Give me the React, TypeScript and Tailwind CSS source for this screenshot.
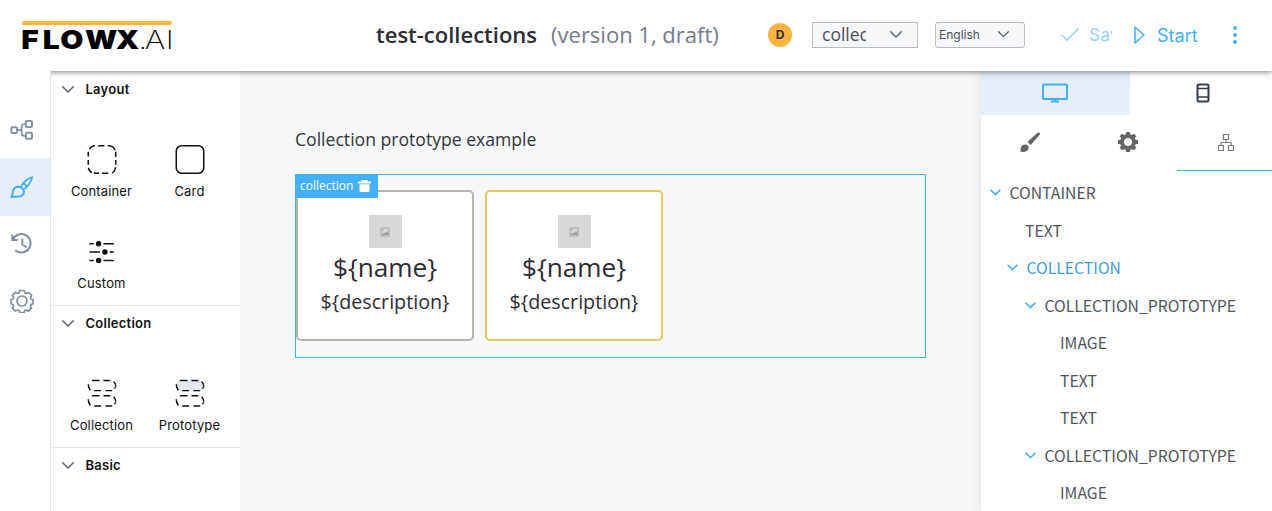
import React from "react";

type IconProps = { className?: string };

function Chevron({ className = "" }: IconProps) {
  return (
    <svg viewBox="0 0 12 7" fill="none" stroke="currentColor" strokeWidth="1.4" strokeLinecap="round" strokeLinejoin="round" className={className}>
      <path d="M.7.8 6 6.1 11.3.8" />
    </svg>
  );
}

function Logo() {
  return (
    <svg viewBox="0 0 160 32" className="h-8 w-[160px] overflow-visible">
      <rect x="0.5" y="1" width="149" height="4" fill="#fbb440" />
      <text transform="scale(1.15 1)" x="-0.7 18 33.2 54.8 81.6" y="29" fontFamily="Inter" fontWeight="900" fontSize="26">FLOWX</text>
      <text transform="scale(1.2 1)" x="97 102.3 119.8" y="29" fontFamily="Inter" fontWeight="200" fontSize="26">.AI</text>
    </svg>
  );
}

function ContainerIcon() {
  return (
    <svg viewBox="0 0 30 30" className="size-[30px]" fill="none" stroke="#101114" strokeWidth="1.6">
      <path d="M2.2 4.500Q3.500 1 7.700.8M11 .8h6.500M21 .8Q27.200.6 28.500 5.500M29.200 7v5.500M29.200 15.500v5M29 23Q28.500 27.500 25.500 28.800M21.500 29.200h-6.500M12 29.200H6.500M4.500 28.700Q1.300 27 1 23.500M.8 20.500v-5M.8 12V7" />
    </svg>
  );
}

function CardIcon() {
  return (
    <svg viewBox="0 0 30 30" className="size-[30px]" fill="none" stroke="#101114" strokeWidth="1.6">
      <rect x=".8" y=".8" width="28.400" height="28.400" rx="5.500" />
    </svg>
  );
}

function CustomIcon() {
  return (
    <svg viewBox="0 0 30 30" className="size-[30px]" fill="none" stroke="#101114" strokeWidth="1.4">
      <path d="M2 7h4.500M16.500 7H27.300M2 15.500h11M23 15.500h4.300M2 24.300h4.500M16.500 24.300H27.300" />
      <g fill="#101114" stroke="none">
        <circle cx="11.500" cy="7" r="2.800" />
        <circle cx="18" cy="15.500" r="2.800" />
        <circle cx="11.500" cy="24.300" r="2.800" />
      </g>
    </svg>
  );
}

function RowsIcon({ filled = false }: { filled?: boolean }) {
  return (
    <svg viewBox="0 0 30 30" className="size-[30px]" fill="none" stroke="#101114" strokeWidth="1.5">
      {filled && <rect x=".7" y="1.500" width="28.600" height="11" rx="5" fill="#e3e8ec" stroke="none" />}
      <path d="M4.500 1.500h8M16.500 1.500h7M27 2.800Q29.300 4.500 29.300 8M29 8.500 28 10M.8 5.500Q.8 9 3 11.800M7 12h7M18.500 12h7" />
      <path d="M4.500 17.300h8M16.500 17.300h7M27 18.500Q29.300 20 29.300 23.500M29 24 28 26M.8 21Q.8 25 3 27.500M7 28h7M18.500 28h7" />
    </svg>
  );
}

function Tool({ label, children }: { label: string; children: React.ReactNode }) {
  return (
    <div className="flex h-[92px] w-[88px] flex-col items-center pt-[38px]">
      {children}
      <span className="mt-[9px] text-[13px] leading-4 tracking-[0.15px] whitespace-nowrap">{label}</span>
    </div>
  );
}

function Section({ title, children }: { title: string; children?: React.ReactNode }) {
  return (
    <section className="border-b border-[#dfe5ea] pb-[14px] last:border-b-0">
      <h2 className="flex h-[35px] items-center gap-[11.500px] pt-px pl-[11px] text-[13px] font-semibold tracking-[0.25px]">
        <Chevron className="-mt-0.5 h-[7px] w-3 text-[#565d68]" />
        {title}
      </h2>
      <div className="flex flex-wrap pl-[6.500px]">{children}</div>
    </section>
  );
}

function FlowIcon() {
  return (
    <svg viewBox="0 0 24 24" className="size-6" fill="none" stroke="currentColor" strokeWidth="2">
      <rect x="1.300" y="9.300" width="5.800" height="5.600" rx="1.200" />
      <rect x="15.800" y="3" width="6.200" height="6" rx="1.200" />
      <rect x="15.800" y="14.800" width="6.200" height="6" rx="1.200" />
      <path d="M7 12.200h4.500M15.500 6H14.500q-2.800 0-2.800 3v6q0 3 2.800 3h1" strokeWidth="1.700" />
    </svg>
  );
}

function BrushIcon() {
  return (
    <svg viewBox="0 0 24 24" className="size-6" fill="none" stroke="currentColor" strokeWidth="2" strokeLinejoin="round">
      <path d="M1.200 21.700c2-1.700 1.200-4 2-6.700 1-3 5-4.300 8-2.500 4 2.700 3.500 7.500-1 8.800-2.500.6-5 .2-9 .4Z" />
      <path d="M11 12.300c1-3.800 5.500-8.500 11.300-10.300C21 7 18.500 11.300 14 14.300M13.200 8.700c2 .4 3.300 1.700 3.700 3.500" strokeWidth="1.700" />
    </svg>
  );
}

function HistoryIcon() {
  return (
    <svg viewBox="0 0 24 24" className="size-6" fill="none" stroke="currentColor" strokeWidth="2">
      <path d="M2.300 2.500V8h5.500M3 7.500A9.200 9.200 0 1 1 5.300 18.200M12.300 6.500v6l4.500 3" />
    </svg>
  );
}

function CogIcon() {
  return (
    <svg viewBox="0 0 24 24" className="size-6" fill="none" stroke="currentColor" strokeWidth="1.700" strokeLinejoin="round">
      <path d="M9.800 1.500h4.400l.8 2.400 1.300.6 2.300-1.100 3 3-1.100 2.300.5 1.300 2 .8v3.900l-2 .9-.6 1.400 1 2.200-2.900 2.900-2.300-1-1.400.5-.8 2h-4l-.9-2-1.400-.6-2.300 1.100-2.900-2.900 1.100-2.200-.6-1.400-2-.9v-3.900l2.100-.8.5-1.300-1.100-2.300 2.900-3 2.400 1.100 1.200-.6Z" />
      <circle cx="12" cy="12" r="5" />
    </svg>
  );
}

function Trash() {
  return (
    <svg viewBox="0 0 13 12" className="h-3 w-[13px]" fill="#fff">
      <path d="M3.500 0h6v1.500H13V3.500H0V1.500h3.500ZM1.500 4.200h10V11q0 1-1 1h-8q-1 0-1-1Z" />
    </svg>
  );
}

function Picture() {
  return (
    <div className="flex size-[33px] items-center justify-center bg-[#d8d8d8]">
      <svg viewBox="0 0 10 10" className="size-[10px]" fill="none" stroke="#a0a0a0">
        <rect x="1" y="1" width="8" height="8" strokeWidth=".9" />
        <path d="M1.500 8 4 5.500l1 .8L7 4l1.700 2.200V8Z" fill="#a0a0a0" stroke="none" />
        <circle cx="3" cy="3.200" r=".8" fill="#a0a0a0" stroke="none" />
      </svg>
    </div>
  );
}

function Prototype({ className }: { className: string }) {
  return (
    <div className={"flex h-[151px] w-[178px] flex-col items-center rounded-[5px] border-2 bg-white pt-[23px] text-[#2b2c34] " + className}>
      <Picture />
      <div className="mt-px text-[26.200px] leading-9">{"${name}"}</div>
      <div className="mt-[3px] text-[19.700px] leading-7">{"${description}"}</div>
    </div>
  );
}

const tree = [
  { label: "CONTAINER", pad: "pl-[9px]", open: true },
  { label: "TEXT", pad: "pl-[44px]" },
  { label: "COLLECTION", pad: "pl-[26px]", open: true, active: true },
  { label: "COLLECTION_PROTOTYPE", pad: "pl-[44px]", open: true },
  { label: "IMAGE", pad: "pl-[79px]" },
  { label: "TEXT", pad: "pl-[79px]" },
  { label: "TEXT", pad: "pl-[79px]" },
  { label: "COLLECTION_PROTOTYPE", pad: "pl-[44px]", open: true },
  { label: "IMAGE", pad: "pl-[79px]" },
];

export default function App() {
  return (
    <div className="flex h-[511px] w-[1272px] flex-col overflow-hidden bg-white font-['Inter',sans-serif] text-[#101114]">
      <header className="relative z-10 flex h-[71px] shrink-0 items-center bg-white shadow-[0_1px_6px_rgba(0,0,0,0.5)]">
        <div className="w-[376px] pl-[22px]">
          <Logo />
        </div>
        <div className="-mt-1 flex w-[392px] items-baseline gap-[14px] font-['Open_Sans',sans-serif] text-[22px] leading-8 whitespace-nowrap">
          <h1 className="font-semibold text-[#2b2c34]">test-collections</h1>
          <span className="text-[#747b8b]">(version 1, draft)</span>
        </div>
        <div className="-mt-0.5 flex size-6 items-center justify-center rounded-full bg-[#fbb440] text-[12px] font-bold text-[#2b2c34]">D</div>
        <div className="-mt-0.5 ml-5 flex h-[26px] w-[106px] items-center justify-between border border-[#b9bcc1] bg-[#f7f8fa] pr-[15px] pl-[9px]">
          <span className="-mt-0.5 w-11 overflow-hidden font-['Open_Sans',sans-serif] text-[17.500px] leading-6 text-[#4b505c]">collections</span>
          <Chevron className="h-[7px] w-3 text-[#565d68]" />
        </div>
        <div className="-mt-0.5 ml-[17px] flex h-[26px] w-[90px] items-center justify-between rounded-[3px] border border-[#b9bcc1] bg-[#f7f8fa] pr-[15px] pl-[3px]">
          <span className="text-[12px] text-[#4b505c]">English</span>
          <Chevron className="h-[6.500px] w-[11px] text-[#565d68]" />
        </div>
        <div className="-mt-0.5 ml-9 flex items-center text-[17.500px] leading-6 text-[#99d3fb]">
          <svg viewBox="0 0 18 13" className="h-[13px] w-[18px]" fill="none" stroke="currentColor" strokeWidth="1.500">
            <path d="m.6 6.700 5.200 5.500L17.500.6" />
          </svg>
          <span className="ml-[10px] w-[23px] overflow-hidden">Save</span>
        </div>
        <div className="ml-[22px] flex items-center text-[18px] leading-6 text-[#42affb]">
          <svg viewBox="0 0 11 18" className="-mt-0.5 h-[18px] w-[11px]" fill="none" stroke="currentColor" strokeWidth="1.500" strokeLinejoin="round">
            <path d="M1 1v16l9-8Z" />
          </svg>
          <span className="ml-3">Start</span>
        </div>
        <svg viewBox="0 0 4 18" className="-mt-0.5 ml-[35px] h-[18px] w-1" fill="#42affb">
          <circle cx="2" cy="2" r="1.900" />
          <circle cx="2" cy="9" r="1.900" />
          <circle cx="2" cy="16" r="1.900" />
        </svg>
      </header>

      <div className="flex min-h-0 flex-1">
        <nav className="relative z-20 flex w-[51px] shrink-0 flex-col border-r border-[#dfe5ea] bg-white pt-[30px] text-[#8391a2]">
          <div className="flex h-[57px] items-center pl-[10px]"><FlowIcon /></div>
          <div className="flex h-[58px] items-center bg-[#e6eefa] pl-[10px] text-[#42affb]"><BrushIcon /></div>
          <div className="flex h-[56px] items-center pl-[10px]"><HistoryIcon /></div>
          <div className="flex h-[58px] items-center pl-[10px]"><CogIcon /></div>
        </nav>

        <aside className="w-[189px] shrink-0 bg-white pt-px">
          <Section title="Layout">
            <Tool label="Container"><ContainerIcon /></Tool>
            <Tool label="Card"><CardIcon /></Tool>
            <Tool label="Custom"><CustomIcon /></Tool>
          </Section>
          <Section title="Collection">
            <Tool label="Collection"><RowsIcon /></Tool>
            <Tool label="Prototype"><RowsIcon filled /></Tool>
          </Section>
          <Section title="Basic" />
        </aside>

        <main className="min-w-0 flex-1 bg-[#f7f8fa] pt-[55px] pl-[55px] font-['Open_Sans',sans-serif]">
          <p className="text-[17.600px] leading-[26px] text-[#34353c]">Collection prototype example</p>
          <div className="relative mt-[22px] flex h-[184px] w-[631px] gap-[11px] border border-[#44b0fc] pt-[15px]">
            <Prototype className="border-[#b8b5ad]" />
            <Prototype className="border-[#dfcb5e]" />
            <div className="absolute -top-px -left-px flex h-6 w-[83px] items-center gap-[5px] bg-[#44b0fc] pl-[5px] text-[12px] text-white">
              collection
              <Trash />
            </div>
          </div>
        </main>

        <aside className="w-[291px] shrink-0 bg-white shadow-[0_0_12px_rgba(0,0,0,0.1)]">
          <div className="flex h-11">
            <div className="flex w-[149px] items-center justify-center bg-[#e6eefa] pr-px">
              <svg viewBox="0 0 26 20" className="h-5 w-[26px]" fill="none" stroke="#42affb" strokeWidth="2">
                <rect x="1" y="1.500" width="24" height="14.500" rx="1" />
                <path d="M13 16v2.500M9 18.500h8" />
              </svg>
            </div>
            <div className="flex flex-1 items-center justify-center pl-1">
              <svg viewBox="0 0 14 20" className="h-5 w-[14px]" fill="none" stroke="#343c4e" strokeWidth="2">
                <rect x="1.500" y="1.500" width="11" height="17" rx="1.200" />
                <path d="M1.500 5.500h11M1.500 14h11" strokeWidth="1.600" />
              </svg>
            </div>
          </div>
          <div className="flex h-14 text-[#646464]">
            <div className="flex w-[98px] items-center justify-center pb-0.5">
              <svg viewBox="0 0 20 20" className="size-5" fill="currentColor">
                <path d="M19.600.8q1 1-.1 2.300L10.700 13 7.500 9.800 17 1.200q1.500-1.400 2.600-.4ZM6 12.500q2.500.3 2.800 3c-.2 3.500-4.500 5.500-8.600 4Q.8 18 .8 16.300q.5-4 5.200-3.800Z" />
              </svg>
            </div>
            <div className="flex w-[98px] items-center justify-center pb-0.5">
              <svg viewBox="0 0 20 20" className="size-5" fill="currentColor" fillRule="evenodd">
                <path d="M8.300 0h3.400l.7 2.600 1.200.5L16 1.800 18.200 4l-1.300 2.400.5 1.200 2.600.7v3.400l-2.600.7-.5 1.200 1.300 2.400-2.200 2.200-2.400-1.300-1.200.5-.7 2.600H8.300l-.7-2.600-1.200-.5L4 18.200 1.800 16l1.300-2.400-.5-1.200L0 11.700V8.300l2.600-.7.5-1.200L1.800 4 4 1.800l2.400 1.300 1.200-.5ZM10 6a4 4 0 1 0 0 8 4 4 0 0 0 0-8Z" />
              </svg>
            </div>
            <div className="flex flex-1 items-center justify-center border-b border-[#44b0fc] pl-[3px]">
              <svg viewBox="0 0 16 17" className="h-[17px] w-4" fill="none" stroke="#7b7b7b" strokeWidth="1.200">
                <path d="M5.500.5h5v5h-5ZM.5 11.500h5v5h-5ZM10.500 11.500h5v5h-5ZM8 5.500v3M3 11.500v-3h10v3" />
              </svg>
            </div>
          </div>
          <ul className="pt-[3px] font-['Noto_Sans_CJK_SC',sans-serif] text-[15.750px] leading-6 text-[#50545e]">
            {tree.map((row, i) => (
              <li key={i} className={"flex h-[37.500px] items-center gap-[8.500px] " + row.pad + (row.active ? " text-[#3d9de0]" : "")}>
                {row.open && (
                  <svg viewBox="0 0 11 7" className="h-[7px] w-[11px]" fill="none" stroke="#42affb" strokeWidth="1.600">
                    <path d="m.6.700 4.900 4.900L10.400.7" />
                  </svg>
                )}
                <span className="pt-px">{row.label}</span>
              </li>
            ))}
          </ul>
        </aside>
      </div>
    </div>
  );
}
